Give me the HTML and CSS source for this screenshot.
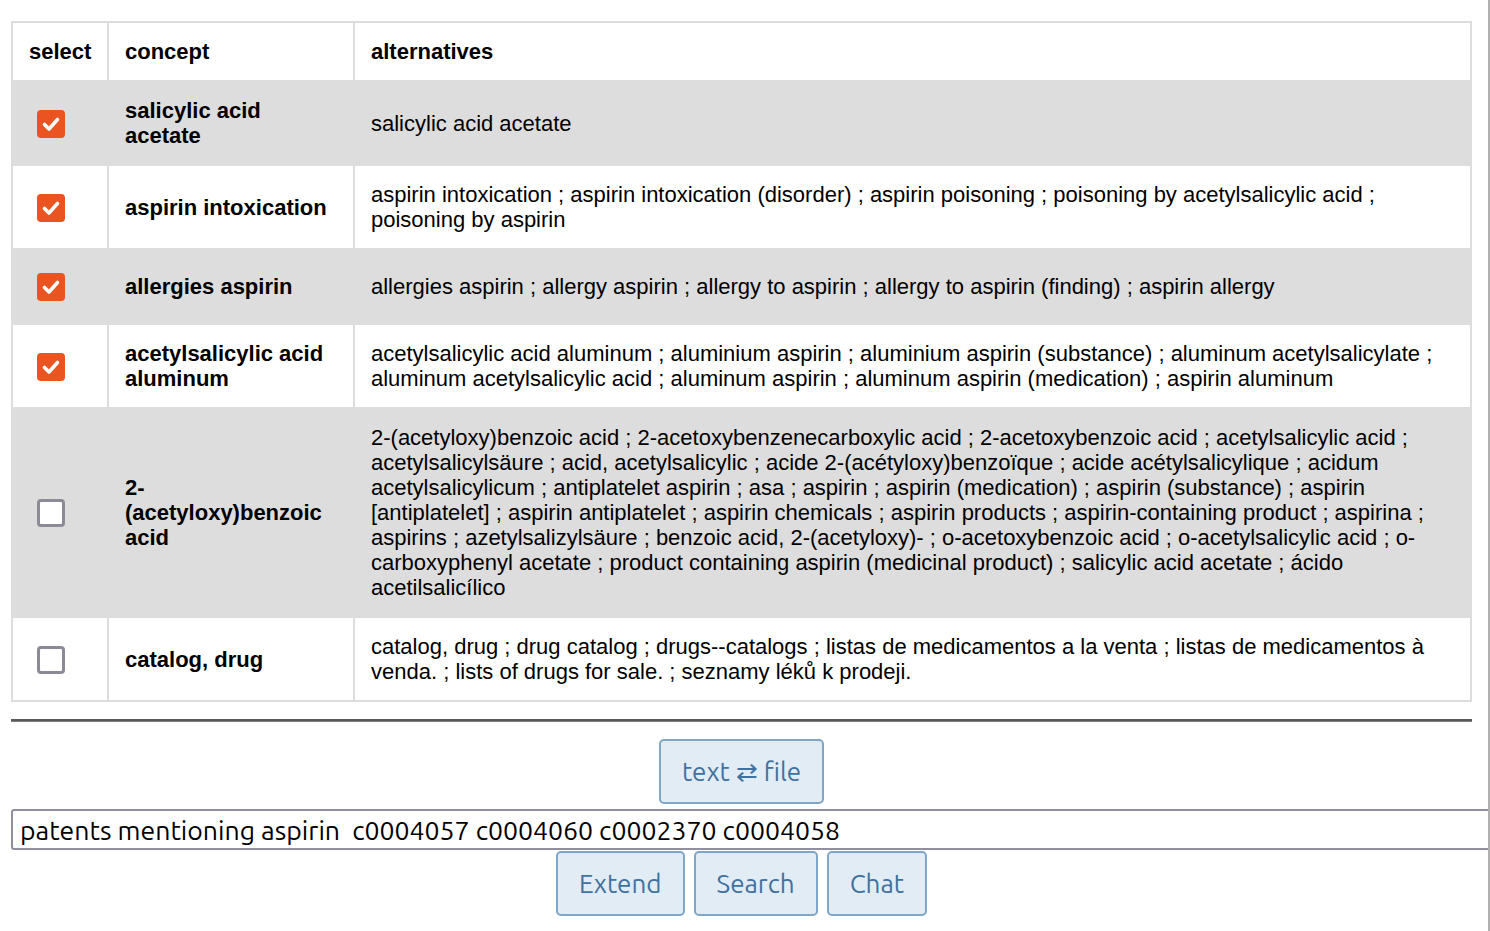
FILE: index.html
```html
<!DOCTYPE html>
<html>
<head>
<meta charset="utf-8">
<link rel="stylesheet" href="styles.css">
</head>
<body>
<div class="page">
  <table class="concepts">
    <colgroup>
      <col class="c-select">
      <col class="c-concept">
      <col class="c-alt">
    </colgroup>
    <thead>
      <tr><th>select</th><th>concept</th><th>alternatives</th></tr>
    </thead>
    <tbody>
      <tr class="shade">
        <td><span class="cb on"><svg viewBox="0 0 28 28"><path d="M7.5 14.5 L12 19 L20.5 9.5"/></svg></span></td>
        <td class="concept">salicylic acid acetate</td>
        <td>salicylic acid acetate</td>
      </tr>
      <tr>
        <td><span class="cb on"><svg viewBox="0 0 28 28"><path d="M7.5 14.5 L12 19 L20.5 9.5"/></svg></span></td>
        <td class="concept">aspirin intoxication</td>
        <td>aspirin intoxication ; aspirin intoxication (disorder) ; aspirin poisoning ; poisoning by acetylsalicylic acid ; poisoning by aspirin</td>
      </tr>
      <tr class="shade">
        <td><span class="cb on"><svg viewBox="0 0 28 28"><path d="M7.5 14.5 L12 19 L20.5 9.5"/></svg></span></td>
        <td class="concept">allergies aspirin</td>
        <td>allergies aspirin ; allergy aspirin ; allergy to aspirin ; allergy to aspirin (finding) ; aspirin allergy</td>
      </tr>
      <tr>
        <td><span class="cb on"><svg viewBox="0 0 28 28"><path d="M7.5 14.5 L12 19 L20.5 9.5"/></svg></span></td>
        <td class="concept">acetylsalicylic acid aluminum</td>
        <td>acetylsalicylic acid aluminum ; aluminium aspirin ; aluminium aspirin (substance) ; aluminum acetylsalicylate ; aluminum acetylsalicylic acid ; aluminum aspirin ; aluminum aspirin (medication) ; aspirin aluminum</td>
      </tr>
      <tr class="shade">
        <td><span class="cb"></span></td>
        <td class="concept">2-(acetyloxy)benzoic acid</td>
        <td>2-(acetyloxy)benzoic acid ; 2-acetoxybenzenecarboxylic acid ; 2-acetoxybenzoic acid ; acetylsalicylic acid ; acetylsalicylsäure ; acid, acetylsalicylic ; acide 2-(acétyloxy)benzoïque ; acide acétylsalicylique ; acidum acetylsalicylicum ; antiplatelet aspirin ; asa ; aspirin ; aspirin (medication) ; aspirin (substance) ; aspirin [antiplatelet] ; aspirin antiplatelet ; aspirin chemicals ; aspirin products ; aspirin-containing product ; aspirina ; aspirins ; azetylsalizylsäure ; benzoic acid, 2-(acetyloxy)- ; o-acetoxybenzoic acid ; o-acetylsalicylic acid ; o-carboxyphenyl acetate ; product containing aspirin (medicinal product) ; salicylic acid acetate ; ácido acetilsalicílico</td>
      </tr>
      <tr>
        <td><span class="cb"></span></td>
        <td class="concept">catalog, drug</td>
        <td>catalog, drug ; drug catalog ; drugs--catalogs ; listas de medicamentos a la venta ; listas de medicamentos à venda. ; lists of drugs for sale. ; seznamy léků k prodeji.</td>
      </tr>
    </tbody>
  </table>

  <div class="rule"></div>

  <div class="toggle-row">
    <button class="btn">text ⇄ file</button>
  </div>

  <input class="query" type="text" value="patents mentioning aspirin  c0004057 c0004060 c0002370 c0004058">

  <div class="actions">
    <button class="btn btn-extend">Extend</button>
    <button class="btn btn-search">Search</button>
    <button class="btn btn-chat">Chat</button>
  </div>
</div>
<div class="edge"></div>
</body>
</html>
```

FILE: styles.css
```css
html, body {
  margin: 0;
  padding: 0;
  background: #fff;
}

body {
  font-family: "Liberation Sans", Arial, sans-serif;
  color: #000;
  overflow: hidden;
}

.page {
  width: 1461px;
  margin-left: 11px;
  padding-top: 21px;
}

.concepts {
  width: 1461px;
  border-collapse: collapse;
  table-layout: fixed;
  border: 2px solid #dddddd;
  font-size: 22px;
  line-height: 25px;
}

.c-select { width: 96px; }
.c-concept { width: 246px; }

.concepts th,
.concepts td {
  border: 2px solid #dddddd;
  padding: 16px;
  text-align: left;
  vertical-align: middle;
}

.concepts th {
  font-weight: bold;
}

.concepts td.concept {
  font-weight: bold;
}

.concepts tr.shade td {
  background: #dddddd;
}

.cb {
  display: block;
  box-sizing: border-box;
  width: 28px;
  height: 28px;
  margin: 7px 0 6px 8px;
  border: 3px solid #8b8a96;
  border-radius: 4px;
  background: #fff;
}

.cb.on {
  border: none;
  background: #e95420;
}

.cb svg {
  display: block;
  width: 28px;
  height: 28px;
}

.cb svg path {
  fill: none;
  stroke: #fff;
  stroke-width: 3.6;
  stroke-linecap: round;
  stroke-linejoin: round;
}

.rule {
  margin-top: 17px;
  height: 0;
  border-top: 2px solid #5a5a5a;
  border-bottom: 1px solid #7c7c7c;
}

.toggle-row {
  display: flex;
  justify-content: center;
  margin-top: 17px;
}

.btn {
  box-sizing: border-box;
  height: 65px;
  padding: 0 21px;
  font-family: "Ubuntu", "Noto Sans", "Open Sans", sans-serif;
  font-size: 26px;
  color: #3f72a0;
  background: #e2ecf5;
  border: 2px solid #7fa6c6;
  border-radius: 5px;
}

.query {
  display: block;
  box-sizing: border-box;
  width: 1500px;
  height: 41px;
  margin-top: 5px;
  padding: 0 7px;
  font-family: "Ubuntu", "Noto Sans", "Open Sans", sans-serif;
  font-size: 26.6px;
  color: #000;
  border: 2px solid #928e9e;
  border-radius: 3px;
  outline: none;
  background: #fff;
}

.actions {
  display: flex;
  justify-content: center;
  gap: 9px;
  margin-top: 1px;
}

.edge {
  position: fixed;
  top: 0;
  right: 0;
  width: 2px;
  height: 100%;
  background: #b0b0b0;
}
```
